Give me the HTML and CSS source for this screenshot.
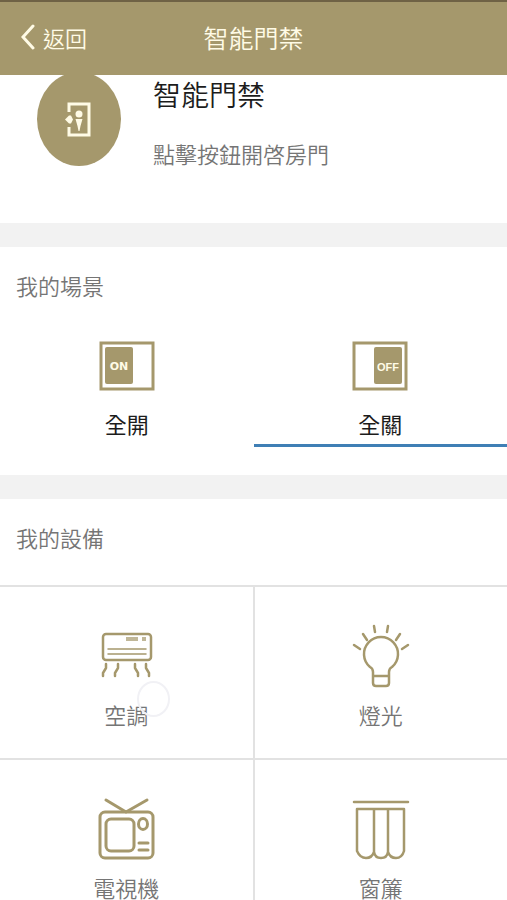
FILE: index.html
```html
<!DOCTYPE html>
<html lang="zh-Hant">
<head>
<meta charset="utf-8">
<meta name="viewport" content="width=device-width, initial-scale=1">
<title>智能門禁</title>
<link rel="stylesheet" href="styles.css">
</head>
<body>
<div class="app">
  <header class="topbar">
    <a class="back" href="#">
      <svg class="back-icon" width="14" height="26" viewBox="0 0 14 26" aria-hidden="true"><path d="M12 2 2 13l10 11"/></svg>
      <span>返回</span>
    </a>
    <h1 class="title">智能門禁</h1>
  </header>

  <main class="content">
    <section class="hero">
      <button class="door" type="button" aria-label="開啓房門">
        <svg width="28" height="36" viewBox="0 0 28 36" aria-hidden="true">
          <path class="door-frame" d="M4 11V3h20v31H4v-8"/>
          <path class="door-fill" d="M0 18.500l4-4h2l2 4-2 4H4z"/>
          <circle class="door-fill" cx="14" cy="13" r="3.500"/>
          <path class="door-fill" d="M10.500 18h7l-2 7-1 5h-1l-1-5z"/>
        </svg>
      </button>
      <div class="hero-text">
        <h2 class="hero-title">智能門禁</h2>
        <p class="hero-note">點擊按鈕開啓房門</p>
      </div>
    </section>

    <section class="panel">
      <h2 class="panel-title">我的場景</h2>
      <div class="scenes">
        <button class="scene" type="button">
          <svg width="56" height="50" viewBox="0 0 56 50" aria-hidden="true">
            <rect class="switch-frame" x="2" y="2" width="52" height="46"/>
            <rect class="switch-knob" x="6" y="6" width="28" height="37" rx="2"/>
            <text class="switch-text" x="20" y="29">ON</text>
          </svg>
          <span>全開</span>
        </button>
        <button class="scene scene-active" type="button">
          <svg width="56" height="50" viewBox="0 0 56 50" aria-hidden="true">
            <rect class="switch-frame" x="2" y="2" width="52" height="46"/>
            <rect class="switch-knob" x="22" y="6" width="28" height="37" rx="2"/>
            <text class="switch-text switch-text-off" x="36" y="30">OFF</text>
          </svg>
          <span>全關</span>
        </button>
      </div>
    </section>

    <section class="panel">
      <h2 class="panel-title">我的設備</h2>
      <div class="devices">
        <button class="device" type="button">
          <svg class="line-icon" width="60" height="64" viewBox="0 0 60 64" aria-hidden="true">
            <rect x="7" y="10" width="48" height="26" rx="3"/>
            <path class="thin" d="M12 25h38M12 30h38"/>
            <path class="vent" d="M30 15h12M46 15h4"/>
            <path d="M10 40v4l-3 5v3M22 40v4l-3 5v3M39 40v4l3 5v3M50 40v4l3 5v3"/>
          </svg>
          <span>空調</span>
          <i class="touch"></i>
        </button>
        <button class="device" type="button">
          <svg class="line-icon" width="60" height="64" viewBox="0 0 60 64" aria-hidden="true">
            <path d="M22 52v-4c0-2-1-4-3-5a17 17 0 1 1 22 0c-2 1-3 3-3 5v11q0 3-3 3H25q-3 0-3-3zM22 52h16"/>
            <path d="M3 21l6 4M12 10l4 6M23 2l1 6M37 2l-1 6M49 10l-4 6M57 21l-6 4"/>
          </svg>
          <span>燈光</span>
        </button>
        <button class="device" type="button">
          <svg class="line-icon" width="60" height="64" viewBox="0 0 60 64" aria-hidden="true">
            <rect class="bold" x="4" y="15" width="53" height="46" rx="5"/>
            <rect class="bold" x="10" y="22" width="28" height="32" rx="5"/>
            <ellipse class="bold" cx="47" cy="27" rx="4.500" ry="5.500"/>
            <path class="bold" d="M43 46h9M43 53h9M10 3l20 12L51 3"/>
          </svg>
          <span>電視機</span>
        </button>
        <button class="device" type="button">
          <svg class="line-icon" width="60" height="64" viewBox="0 0 60 64" aria-hidden="true">
            <path d="M3 5h54M6 12h47v42q-2 7-8 7t-8-6q-1 6-7 6t-7-6q-2 6-8 6t-9-7zM23 12v43M37 12v43"/>
          </svg>
          <span>窗簾</span>
        </button>
      </div>
    </section>
  </main>
</div>
</body>
</html>
```
FILE: styles.css
```css
* {
  box-sizing: border-box;
}

body {
  --gold: #a5986c;
  --ink: #1c1c1c;
  --muted: #757575;
  --line: #e2e2e2;
  margin: 0;
  font-family: "Noto Sans CJK TC", sans-serif;
  font-weight: 350;
  font-size: 22px;
  line-height: 32px;
  color: var(--muted);
  background: #f2f2f2;
}

h1,
h2,
p {
  margin: 0;
  font-weight: inherit;
}

button {
  margin: 0;
  padding: 0;
  border: 0;
  background: none;
  font: inherit;
  color: inherit;
  cursor: pointer;
}

.app {
  display: flex;
  flex-direction: column;
  height: 100vh;
}

.topbar {
  flex: none;
  display: grid;
  grid-template-columns: 1fr auto 1fr;
  align-items: center;
  height: 75px;
  padding-bottom: 4px;
  border-top: 2px solid #6f6245;
  background: var(--gold);
  color: #fffbe6;
}

.back {
  display: flex;
  align-items: center;
  gap: 8px;
  padding-left: 21px;
  color: inherit;
  text-decoration: none;
}

.back-icon {
  fill: none;
  stroke: currentColor;
  stroke-width: 3;
  stroke-linecap: round;
}

.title {
  font-size: 25px;
}

.content {
  flex: 1;
  min-height: 0;
  overflow-y: auto;
  scrollbar-width: none;
  display: flex;
  flex-direction: column;
  gap: 24px;
}

.hero {
  flex: none;
  display: flex;
  gap: 32px;
  padding: 0 16px 54px 37px;
  background: #fff;
}

.door {
  display: flex;
  align-items: center;
  justify-content: center;
  width: 84px;
  height: 94px;
  margin-top: -3px;
  border-radius: 50%;
  background: var(--gold);
}

.door-frame {
  fill: none;
  stroke: #fffbe6;
  stroke-width: 3;
}

.door-fill {
  fill: #fffbe6;
}

.hero-title {
  font-size: 28px;
  line-height: 38px;
  color: var(--ink);
}

.hero-note {
  margin-top: 24px;
}

.panel {
  flex: none;
  background: #fff;
}

.panel-title {
  padding: 22px 16px 32px;
  font-size: 22px;
}

.scenes {
  display: grid;
  grid-template-columns: 1fr 1fr;
  padding-bottom: 28px;
  color: var(--ink);
  font-weight: 400;
}

.scene {
  display: flex;
  flex-direction: column;
  align-items: center;
  gap: 16px;
  padding: 8px 0 5px;
  border-bottom: 3px solid transparent;
}

.scene-active {
  border-bottom-color: #3f7fb5;
}

.switch-frame {
  fill: #fff;
  stroke: var(--gold);
  stroke-width: 3;
}

.switch-knob {
  fill: var(--gold);
}

.switch-text {
  fill: #fffbe6;
  font: 700 11px "DejaVu Sans", sans-serif;
  text-anchor: middle;
}

.switch-text-off {
  font-family: "Liberation Sans", sans-serif;
}

.devices {
  display: grid;
  grid-template-columns: 1fr 1fr;
  gap: 2px;
  border-top: 2px solid var(--line);
  background: var(--line);
}

.device {
  position: relative;
  display: flex;
  flex-direction: column;
  align-items: center;
  gap: 10px;
  padding: 37px 0 28px;
  background: #fff;
}

.line-icon {
  fill: none;
  stroke: var(--gold);
  stroke-width: 2.5;
  stroke-linecap: round;
  stroke-linejoin: round;
}

.line-icon .thin {
  stroke-width: 1.5;
}

.line-icon .vent {
  stroke-width: 4;
  stroke-linecap: butt;
  opacity: 0.7;
}

.line-icon .bold {
  stroke-width: 3;
}

.touch {
  position: absolute;
  top: 94px;
  left: calc(50% + 11px);
  width: 33px;
  height: 36px;
  border: 2px solid #f1f1f5;
  border-radius: 50%;
}
```
